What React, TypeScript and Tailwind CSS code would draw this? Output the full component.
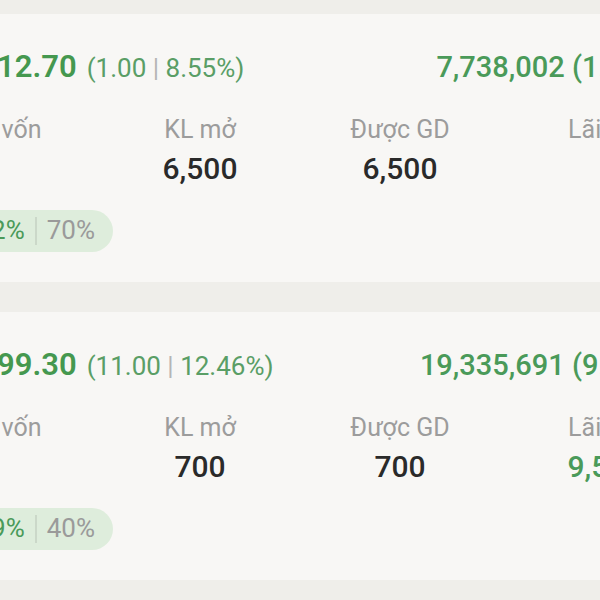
const positions = [
  {
    price: '12.70',
    change: '1.00',
    pct: '8.55%',
    total: '7,738,002',
    totalPct: '(1.53%)',
    open: '6,500',
    tradable: '6,500',
    pl: '',
    ratioA: '10.2%',
    ratioB: '70%',
  },
  {
    price: '99.30',
    change: '11.00',
    pct: '12.46%',
    total: '19,335,691',
    totalPct: '(9.53%)',
    open: '700',
    tradable: '700',
    pl: '9,520',
    ratioA: '38.9%',
    ratioB: '40%',
  },
];

function Stat({ label, value, green }: { label: string; value: string; green?: boolean }) {
  return (
    <div className="flex flex-col items-center">
      <div className="text-[25px] leading-[30px] text-[#9c9c9c]">{label}</div>
      <div
        className={
          'mt-[9px] h-[30px] text-[30px] leading-[30px] font-medium ' +
          (green ? 'text-[#4a9a59] pl-[10px]' : 'text-[#2a2a2a]')
        }
      >
        {value}
      </div>
    </div>
  );
}

function PositionCard({ p }: { p: (typeof positions)[number] }) {
  return (
    <div className="h-[268px] w-[800px] ml-[-100px] bg-[#f8f7f5] pt-[30px]">
      <div className="flex items-baseline justify-between pl-[97px] pr-[29px]">
        <div className="flex items-baseline gap-[10px]">
          <span className="text-[31px] font-semibold text-[#45984f]">{p.price}</span>
          <span className="text-[26px] text-[#5a9e66]">
            ({p.change} <span className="text-[#b5b5b5]">|</span> {p.pct})
          </span>
        </div>
        <div className="text-[29px] font-medium text-[#4a9a59]">
          {p.total} {p.totalPct}
        </div>
      </div>
      <div className="grid grid-cols-4 mt-[24px]">
        <Stat label="Giá vốn" value="" />
        <Stat label="KL mở" value={p.open} />
        <Stat label="Được GD" value={p.tradable} />
        <Stat label="Lãi/lỗ" value={p.pl} green />
      </div>
      <div className="mt-[26px] flex">
        <div className="ml-[-40px] h-[42px] flex items-center gap-[10px] rounded-full bg-[#deeddc] pl-[95px] pr-[18px] text-[26px]">
          <span className="text-[#4a9a59]">{p.ratioA}</span>
          <span className="h-[28px] w-[2px] bg-[#cbd8c9]" />
          <span className="text-[#9a9a9a]">{p.ratioB}</span>
        </div>
      </div>
    </div>
  );
}

export default function App() {
  return (
    <div
      className="w-[600px] h-[600px] overflow-hidden bg-[#efeeea] pt-[14px] flex flex-col gap-[30px]"
      style={{ fontFamily: 'Roboto, "Noto Sans", sans-serif' }}
    >
      {positions.map((p) => (
        <PositionCard key={p.price} p={p} />
      ))}
    </div>
  );
}
